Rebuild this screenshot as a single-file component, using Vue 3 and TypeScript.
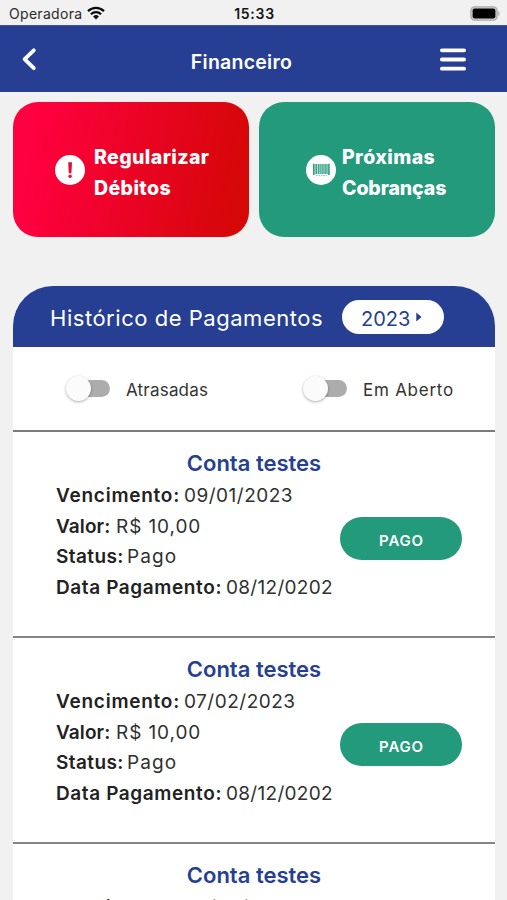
<script setup lang="ts">
import { ref } from 'vue'

interface Payment {
  id: number
  title: string
  dueDate: string
  amount: string
  status: string
  paidAt: string
}

const year = ref(2023)
const late = ref(false)
const open = ref(false)

const payments: Payment[] = [
  { id: 1, title: 'Conta testes', dueDate: '09/01/2023', amount: 'R$ 10,00', status: 'Pago', paidAt: '08/12/0202' },
  { id: 2, title: 'Conta testes', dueDate: '07/02/2023', amount: 'R$ 10,00', status: 'Pago', paidAt: '08/12/0202' },
  { id: 3, title: 'Conta testes', dueDate: '09/03/2023', amount: 'R$ 10,00', status: 'Pago', paidAt: '08/12/0202' },
]
</script>

<template>
  <div class="screen">
    <div class="status-bar">
      <div class="carrier">
        <span>Operadora</span>
        <svg class="wifi" viewBox="0 0 18 14" width="18" height="14">
          <path d="M1 5.1a11.6 11.6 0 0 1 16 0" fill="none" stroke="#0b0b0b" stroke-width="2.3" />
          <path d="M3.9 8.2a7.4 7.4 0 0 1 10.2 0" fill="none" stroke="#0b0b0b" stroke-width="2.2" />
          <path d="M9 13.4 6.1 10.4a4.2 4.2 0 0 1 5.8 0z" fill="#0b0b0b" />
        </svg>
      </div>
      <span class="clock">15:33</span>
      <svg class="battery" viewBox="0 0 31 15" width="31" height="15">
        <rect x="0.9" y="0.9" width="26.2" height="13.2" rx="3.8" fill="#d4d4d4" stroke="#a9a9a9" stroke-width="1.3" />
        <rect x="2.6" y="2.6" width="22.8" height="9.8" rx="1.8" fill="#000" />
        <path d="M28.4 5c1.6.5 1.6 4.500 0 5z" fill="#a9a9a9" />
      </svg>
    </div>

    <header class="app-bar">
      <button class="icon-button" aria-label="Voltar">
        <svg viewBox="0 0 16 24" width="16" height="24">
          <path d="M12.800 3.300 3.600 12.200l9.200 9" fill="none" stroke="#fff" stroke-width="3.800" stroke-linecap="round" stroke-linejoin="round" />
        </svg>
      </button>
      <h1>Financeiro</h1>
      <button class="icon-button" aria-label="Menu">
        <svg viewBox="0 0 26 24" width="26" height="24">
          <path d="M1.900 3.300h22.200M1.900 12.500h22.200M1.900 21.700h22.200" stroke="#fff" stroke-width="3.800" stroke-linecap="round" />
        </svg>
      </button>
    </header>

    <div class="shortcuts">
      <button class="shortcut debts">
        <svg viewBox="0 0 30 30" width="30" height="30">
          <circle cx="15" cy="15" r="15" fill="#fff" />
          <path d="M13.200 7.300h3.800l-.6 10.900h-2.600z" fill="#e80836" />
          <circle cx="15.100" cy="21.300" r="1.700" fill="#e80836" />
        </svg>
        <span class="shortcut-label"><span>Regularizar</span><span>Débitos</span></span>
      </button>
      <button class="shortcut charges">
        <svg viewBox="0 0 30 30" width="30" height="30">
          <circle cx="15" cy="15" r="15" fill="#fff" />
          <path d="M7.800 8.800v11.200M22.900 8.800v11.200" stroke="#239a7c" stroke-width="1.500" />
          <path d="M10.300 9v10M12.300 9v10M14.100 9v10M16.900 9v10M19.200 9v10M21 9v10" stroke="#239a7c" stroke-width="1.200" />
          <path d="M9.200 9v10M15.500 9v10M18 9v10" stroke="#239a7c" stroke-width=".8" opacity=".7" />
          <path d="M9.800 20.600h11.400" stroke="#239a7c" stroke-width="1" stroke-dasharray="1 .7" opacity=".6" />
        </svg>
        <span class="shortcut-label"><span>Próximas</span><span class="tight">Cobranças</span></span>
      </button>
    </div>

    <section class="history">
      <div class="history-head">
        <h2>Histórico de Pagamentos</h2>
        <button class="year">
          <span>{{ year }}</span>
          <svg viewBox="0 0 6 10" width="6" height="10"><path d="M.3.500 5.500 5 .3 9.500z" fill="#263f92" /></svg>
        </button>
      </div>

      <div class="filters">
        <label class="filter late">
          <input v-model="late" type="checkbox" />
          <span class="switch" :class="{ on: late }"><span class="thumb"></span></span>
          <span>Atrasadas</span>
        </label>
        <label class="filter open">
          <input v-model="open" type="checkbox" />
          <span class="switch" :class="{ on: open }"><span class="thumb"></span></span>
          <span>Em Aberto</span>
        </label>
      </div>

      <article v-for="p in payments" :key="p.id" class="payment">
        <h3>{{ p.title }}</h3>
        <div class="payment-body">
          <dl>
            <div class="field due"><dt>Vencimento:</dt><dd>{{ p.dueDate }}</dd></div>
            <div class="field amount"><dt>Valor:</dt><dd>{{ p.amount }}</dd></div>
            <div class="field state"><dt>Status:</dt><dd>{{ p.status }}</dd></div>
            <div class="field paid"><dt>Data Pagamento:</dt><dd>{{ p.paidAt }}</dd></div>
          </dl>
          <button class="badge">PAGO</button>
        </div>
      </article>
    </section>
  </div>
</template>

<style>
body {
  margin: 0;
  background: #f1f1f1;
  overflow: hidden;
}
</style>

<style scoped>
.screen {
  height: 900px;
  overflow: hidden;
  background: #f1f1f1;
  color: #222;
  font-family: Inter, "Open Sans", sans-serif;
}
* {
  box-sizing: border-box;
}
button {
  border: 0;
  padding: 0;
  font-family: inherit;
}
svg {
  display: block;
  flex: none;
}
h1,
h2,
h3,
dl,
dd {
  margin: 0;
}

.status-bar {
  height: 25px;
  display: grid;
  grid-template-columns: 1fr auto 1fr;
  align-items: center;
  padding: 2px 7px 0 9px;
  font-size: 14px;
  color: #2a2a2a;
}
.carrier {
  display: flex;
  align-items: center;
  gap: 5px;
  letter-spacing: 0.3px;
}
.wifi {
  margin-top: -1px;
}
.clock {
  font-weight: 600;
  letter-spacing: 0.7px;
  color: #161616;
}
.battery {
  justify-self: end;
  margin-right: -1px;
}

.app-bar {
  height: 67px;
  display: flex;
  align-items: center;
  justify-content: space-between;
  padding: 0 41px 0 21px;
  background: #263f92;
  color: #fff;
  border-top: 1px solid #3c52a0;
}
.icon-button {
  background: none;
}
h1 {
  font-size: 19.5px;
  line-height: 24px;
  font-weight: 600;
  letter-spacing: 0.25px;
  padding: 5px 0 0 6px;
}

.shortcuts {
  display: grid;
  grid-template-columns: 236px 236px;
  gap: 10px;
  padding: 10px 12px 0 13px;
}
.shortcut {
  height: 135px;
  border-radius: 25px;
  display: flex;
  align-items: center;
  color: #fff;
}
.debts {
  background: linear-gradient(100deg, #ff0040 10%, #d50707 94%);
  padding-left: 42px;
  gap: 9px;
}
.charges {
  background: #239a7c;
  padding-left: 47px;
  gap: 6px;
}
.shortcut-label {
  display: flex;
  flex-direction: column;
  align-items: flex-start;
  font-size: 19.5px;
  line-height: 30.5px;
  font-weight: 800;
  letter-spacing: 0.4px;
  padding-top: 6px;
}
.tight {
  letter-spacing: -0.1px;
}

.history {
  margin: 49px 12px 0 13px;
  background: #fff;
  border-radius: 40px 40px 0 0;
  overflow: hidden;
}
.history-head {
  height: 61px;
  display: flex;
  align-items: center;
  padding-left: 37px;
  background: #263f92;
  color: #fff;
}
h2 {
  width: 292px;
  font-size: 22px;
  line-height: 28px;
  font-weight: 400;
  letter-spacing: 0.53px;
  padding-top: 3px;
}
.year {
  width: 102px;
  height: 34px;
  display: flex;
  align-items: center;
  gap: 6px;
  padding-left: 19px;
  border-radius: 17px;
  background: #fff;
  color: #263f92;
  font-size: 20px;
}
.year span {
  padding-top: 4px;
}

.filters {
  height: 85px;
  display: flex;
  padding-left: 53px;
  border-bottom: 2px solid #7b7b7b;
}
.filter {
  display: flex;
  align-items: center;
  gap: 16px;
  font-size: 17px;
  color: #333;
}
.filter > span:last-child {
  padding-top: 2px;
}
.late {
  width: 237px;
  letter-spacing: 0.2px;
}
.open {
  letter-spacing: 0.75px;
}
input {
  display: none;
}
.switch {
  width: 44px;
  height: 17px;
  display: flex;
  align-items: center;
  border-radius: 9px;
  background: linear-gradient(90deg, transparent 8px, #acacac 8px);
}
.switch.on {
  justify-content: flex-end;
}
.thumb {
  width: 25px;
  height: 25px;
  border-radius: 50%;
  background: #fbfbfb;
  box-shadow: 0 1px 3px rgba(0, 0, 0, 0.32);
}

.payment {
  height: 206px;
  padding-top: 15px;
  border-bottom: 2px solid #858585;
}
h3 {
  text-align: center;
  font-size: 22px;
  line-height: 32px;
  font-weight: 600;
  letter-spacing: 0;
  color: #263f92;
  height: 34px;
}
.payment-body {
  display: flex;
  padding-left: 43px;
}
dl {
  width: 284px;
  font-size: 19px;
}
.field {
  display: flex;
  white-space: nowrap;
  height: 30.5px;
  line-height: 30.5px;
}
dt {
  font-weight: 600;
}
dd {
  color: #303030;
}
.due dt { width: 128px; letter-spacing: 0.75px; }
.due dd { letter-spacing: 0.5px; }
.amount dt { width: 60px; letter-spacing: 0.1px; }
.amount dd { letter-spacing: 0.9px; }
.state dt { width: 71px; letter-spacing: 0.4px; }
.state dd { letter-spacing: 1.1px; }
.paid dt { width: 170px; letter-spacing: 0.6px; }
.paid dd { letter-spacing: 0.3px; }
.badge {
  width: 122px;
  height: 43px;
  margin-top: 36px;
  border-radius: 22px;
  background: #239a7c;
  color: #fff;
  font-size: 15px;
  font-weight: 600;
  letter-spacing: 0.8px;
  padding: 3px 0 0 1px;
}
</style>
